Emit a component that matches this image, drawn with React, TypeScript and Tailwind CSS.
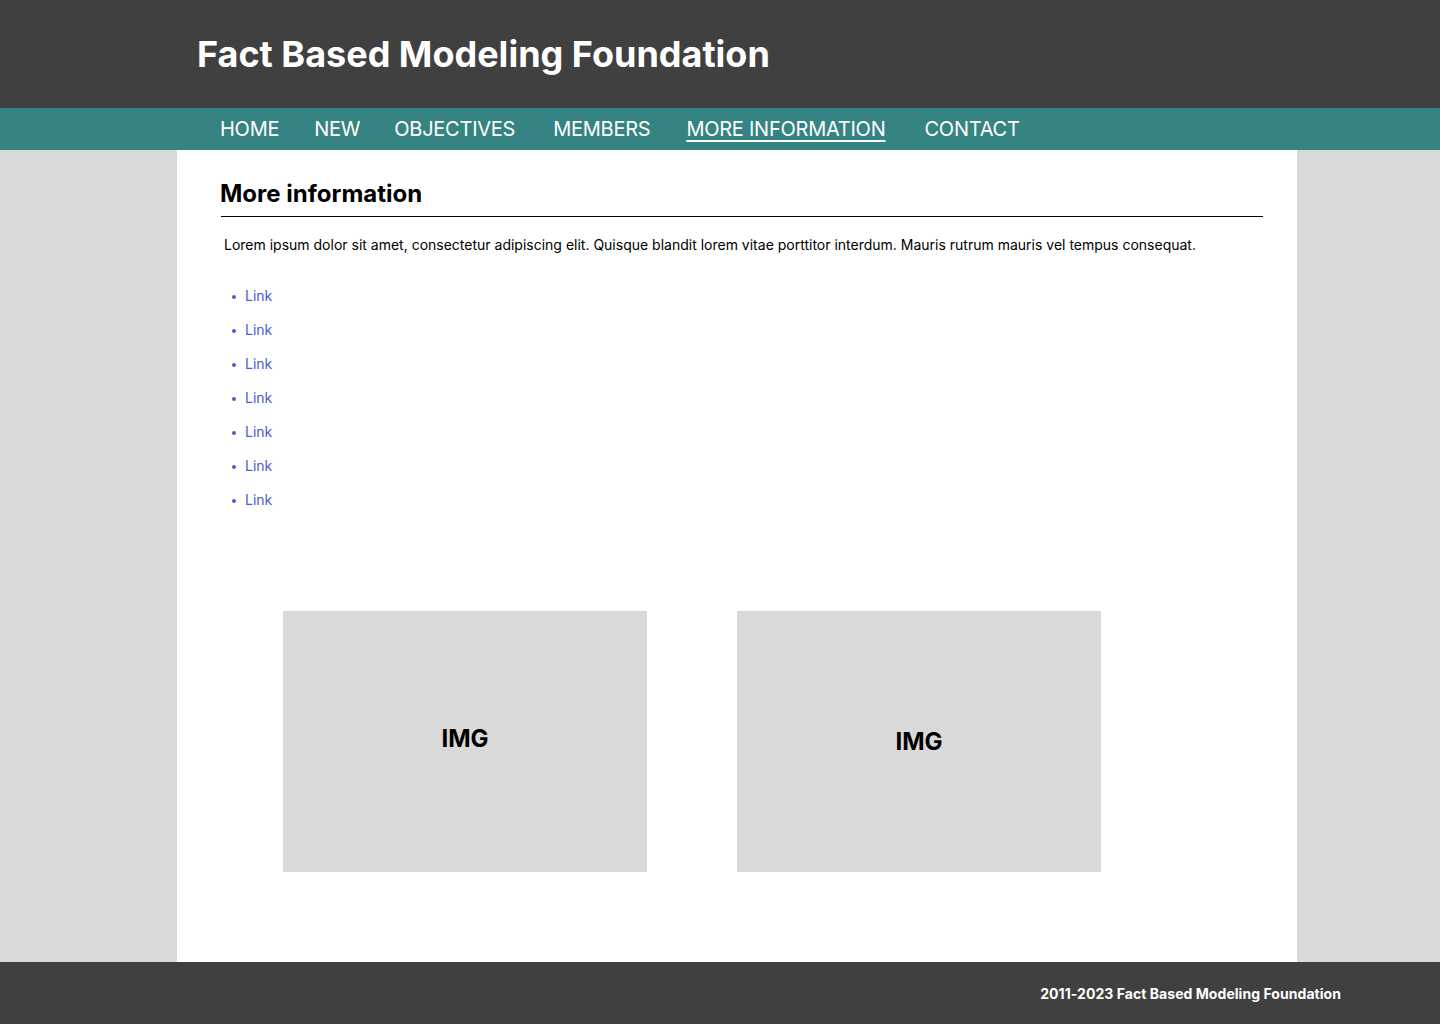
import React from "react";

const navItems: { label: string; ml: string }[] = [
  { label: "HOME", ml: "" },
  { label: "NEW", ml: "ml-[35px]" },
  { label: "OBJECTIVES", ml: "ml-[34px]" },
  { label: "MEMBERS", ml: "ml-[38px]" },
  { label: "MORE INFORMATION", ml: "ml-[36px]" },
  { label: "CONTACT", ml: "ml-[39px]" },
];

export default function App() {
  return (
    <div className="min-h-[1024px] flex flex-col bg-[#d9d9d9]" style={{ fontFamily: "Inter, 'Noto Sans', sans-serif" }}>
      <header className="h-[108px] bg-[#404040] flex items-center pl-[197px]">
        <h1 className="text-[36px] font-bold text-white leading-none pb-[1px]">Fact Based Modeling Foundation</h1>
      </header>
      <nav className="h-[42px] bg-[#358383] flex items-center pl-[220px]">
        {navItems.map((n) => (
          <a
            key={n.label}
            className={
              "text-[20px] text-white leading-none font-normal tracking-[-0.25px] " +
              n.ml +
              (n.label === "MORE INFORMATION" ? " underline underline-offset-[4px] decoration-[1.5px]" : "")
            }
          >
            {n.label}
          </a>
        ))}
      </nav>
      <main className="flex-1 flex">
        <div className="ml-[177px] w-[1120px] bg-white pl-[43px] pr-[34px] pt-[28px] min-h-[812px]">
          <h2 className="text-[24px] font-bold text-black leading-[32px]">More information</h2>
          <div className="mt-[6px] ml-[1px] h-px bg-black" />
          <p className="mt-[18px] ml-[4px] text-[14px] text-black leading-[20px]">
            Lorem ipsum dolor sit amet, consectetur adipiscing elit. Quisque blandit lorem vitae porttitor interdum. Mauris rutrum mauris vel tempus consequat.
          </p>
          <ul className="mt-[31px] ml-[12px] flex flex-col gap-[14px]">
            {Array.from({ length: 7 }).map((_, i) => (
              <li key={i} className="flex items-center text-[14px] leading-[20px] text-[#4a5bd0]">
                <span className="w-[4px] h-[4px] rounded-full bg-[#4a5bd0] mr-[9px] mt-[1px]" />
                <a className="text-[#4a5bd0]">Link</a>
              </li>
            ))}
          </ul>
          <div className="mt-[101px] ml-[63px] flex gap-[90px]">
            <div className="w-[364px] h-[261px] bg-[#d9d9d9] flex items-center justify-center pb-[6px]">
              <span className="text-[24px] font-bold text-black">IMG</span>
            </div>
            <div className="w-[364px] h-[261px] bg-[#d9d9d9] flex items-center justify-center">
              <span className="text-[24px] font-bold text-black">IMG</span>
            </div>
          </div>
        </div>
      </main>
      <footer className="h-[62px] bg-[#404040] flex items-center justify-end pr-[99px]">
        <span className="text-[14px] font-bold text-white tracking-[0.05px]">2011-2023 Fact Based Modeling Foundation</span>
      </footer>
    </div>
  );
}
